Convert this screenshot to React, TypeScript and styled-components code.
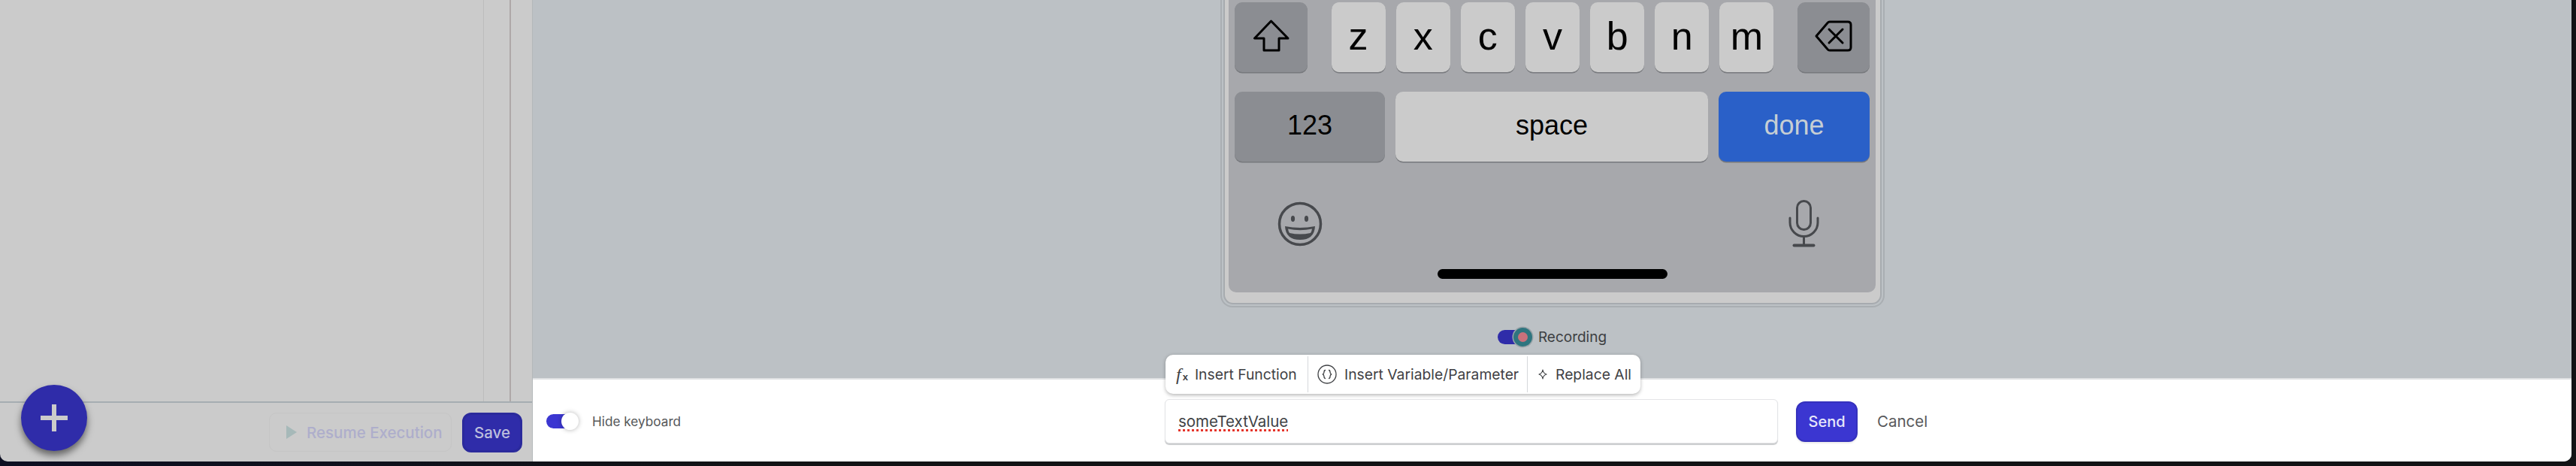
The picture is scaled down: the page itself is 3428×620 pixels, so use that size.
import React from "react";
import styled, { createGlobalStyle } from "styled-components";

const Global = createGlobalStyle`
  html, body { margin: 0; padding: 0; background: #121315; overflow: hidden; }
  * { box-sizing: border-box; }
  #root { width: 3428px; height: 620px; font-family: Inter, "Liberation Sans", sans-serif; }
`;

const Page = styled.div`
  width: 3428px;
  height: 620px;
  padding: 0 6px 6px 0;
  background: linear-gradient(90deg, #0d0f22 0%, #121315 30%);
`;
const Window = styled.div`
  display: flex;
  height: 614px;
  border-radius: 0 0 10px 10px;
  overflow: hidden;
`;

const LeftPanel = styled.aside`
  position: relative;
  display: flex;
  flex-direction: column;
  width: 709px;
  flex: none;
  background: #cbcbcb;
  border-right: 1px solid #b4b8ba;
`;
const LeftBody = styled.div`
  display: flex;
  flex: 1;
`;
const TreeArea = styled.div`
  flex: 1;
  border-right: 1px solid #bcbcbc;
`;
const Rail = styled.div`
  width: 36px;
  border-right: 2px solid #aea8a8;
`;
const RailGap = styled.div`
  width: 28px;
`;
const LeftFooter = styled.div`
  display: flex;
  justify-content: flex-end;
  align-items: center;
  gap: 14px;
  height: 80px;
  padding-right: 13px;
  border-top: 2px solid #a6adb2;
`;
const ResumeButton = styled.div`
  display: flex;
  align-items: center;
  gap: 12px;
  width: 243px;
  height: 52px;
  padding-left: 21px;
  border: 1px solid #c5c5c5;
  border-radius: 10px;
  color: #aeaecb;
  font-size: 20.5px;
  font-weight: 500;
  white-space: nowrap;
`;
const Save = styled.div`
  display: flex;
  align-items: center;
  justify-content: center;
  width: 80px;
  height: 53px;
  border: 3px solid #2b2a9c;
  border-radius: 12px;
  background: #2f2ca9;
  color: #bcbedd;
  font-size: 20.5px;
  font-weight: 500;
`;
const Fab = styled.div`
  position: absolute;
  left: 28px;
  bottom: 14px;
  display: flex;
  align-items: center;
  justify-content: center;
  width: 88px;
  height: 88px;
  border-radius: 50%;
  background: #2f2ca9;
  box-shadow: 0 6px 10px rgba(0, 0, 0, 0.5);
`;

const Main = styled.main`
  display: flex;
  flex-direction: column;
  flex: 1;
  min-width: 0;
  background: #bcc1c5;
`;
const Stage = styled.div`
  display: flex;
  flex-direction: column;
  align-items: center;
  flex: 1;
`;
const PhoneOuter = styled.div`
  width: 884px;
  padding: 0 2px 2px;
  border: solid #a9aeb2;
  border-width: 0 2px 2px;
  border-radius: 0 0 16px 16px;
`;
const PhoneInner = styled.div`
  padding: 0 5.5px 14px;
  background: #cbcbcb;
  border: solid #a7abaf;
  border-width: 0 2px 2px;
  border-radius: 0 0 13px 13px;
`;
const Keyboard = styled.div`
  width: 861px;
  height: 389px;
  padding: 3px 8px 0;
  background: #a7a8ac;
  border-radius: 0 0 10px 10px;
`;
const KeyRow = styled.div`
  display: flex;
  justify-content: space-between;
  height: 93px;
  margin-bottom: 26px;
`;
const Letters = styled.div`
  display: flex;
  gap: 14px;
`;
const Key = styled.div<{ $w: number; $kind?: "light" | "dark" | "blue"; $size?: number }>`
  display: flex;
  align-items: center;
  justify-content: center;
  width: ${(p) => p.$w}px;
  height: 93px;
  padding-bottom: 4px;
  border-radius: 10px;
  font-family: "Liberation Sans", Arial, sans-serif;
  font-size: ${(p) => p.$size ?? 36}px;
  background: ${(p) => (p.$kind === "dark" ? "#8b8d92" : p.$kind === "blue" ? "#2a60c8" : "#cbcbcb")};
  color: ${(p) => (p.$kind === "blue" ? "#c6ced4" : "#000")};
  box-shadow: 0 1.5px 0 #77797d;
`;
const KeyboardTools = styled.div`
  display: flex;
  justify-content: space-between;
  align-items: center;
  height: 63px;
  margin-top: 51px;
  padding: 0 67px 0 57px;
`;
const HomeBar = styled.div`
  width: 306px;
  height: 13px;
  margin: 29px auto 0;
  border-radius: 7px;
  background: #000;
`;
const RecordingRow = styled.div`
  display: flex;
  align-items: center;
  margin-top: 28px;
  font-size: 19px;
  color: #3d3f42;
`;
const RecordingTrack = styled.div`
  position: relative;
  width: 34px;
  height: 19px;
  margin-right: 20px;
  border-radius: 10px;
  background: #2f2ca9;
`;
const RecordingKnob = styled.div`
  position: absolute;
  left: 21px;
  top: -3px;
  width: 25px;
  height: 25px;
  border-radius: 50%;
  border: 6px solid #2f757f;
  background: #c9717b;
  box-shadow: 0 0 0 1.5px #9aa3a8;
`;

const Bar = styled.div`
  display: flex;
  align-items: center;
  height: 111px;
  padding-top: 2px;
  background: #fff;
  border-top: 2px solid #dfe1e3;
`;
const HideGroup = styled.div`
  display: flex;
  align-items: center;
  width: 841px;
  padding-left: 18px;
  font-size: 17.2px;
  color: #555759;
`;
const HideTrack = styled.div`
  position: relative;
  width: 40px;
  height: 19px;
  margin-right: 21px;
  border-radius: 10px;
  background: #3b36d1;
`;
const HideKnob = styled.div`
  position: absolute;
  right: -3px;
  top: -2.5px;
  width: 23px;
  height: 23px;
  border-radius: 50%;
  background: #fff;
  box-shadow: 0 0 6px rgba(0, 0, 0, 0.3);
`;
const InputWrap = styled.div`
  position: relative;
  width: 816px;
  height: 59px;
  margin-right: 24px;
`;
const Input = styled.div`
  display: flex;
  align-items: center;
  height: 100%;
  padding: 0 17px;
  border: 1px solid #e4e5e7;
  border-radius: 6px;
  background: #fff;
  box-shadow: 0 1.5px 1px #c8cacc;
  font-size: 20.5px;
  color: #404245;
`;
const Misspelled = styled.span`
  text-decoration: underline dotted #e5342a;
  text-decoration-thickness: 3px;
  text-underline-offset: 3px;
`;
const Toolbar = styled.div`
  position: absolute;
  left: 1px;
  bottom: calc(100% + 7px);
  display: flex;
  height: 52px;
  padding: 2px 0;
  background: #fff;
  border-radius: 10px;
  box-shadow: 0 1.5px 5px rgba(0, 0, 0, 0.28);
  font-size: 19.3px;
  color: #3f4144;
  white-space: nowrap;
`;
const ToolItem = styled.div<{ $w: number; $pad: number; $gap: number; $last?: boolean }>`
  display: flex;
  align-items: center;
  gap: ${(p) => p.$gap}px;
  width: ${(p) => p.$w}px;
  padding-left: ${(p) => p.$pad}px;
  border-right: ${(p) => (p.$last ? "none" : "1px solid #d5d8db")};
`;
const FxMark = styled.span`
  font-family: "Liberation Serif", "DejaVu Serif", serif;
  font-style: italic;
  font-size: 24px;
  line-height: 1;
  color: #3f4144;
  b {
    font-style: normal;
    font-family: "Liberation Sans", sans-serif;
    font-size: 13px;
    margin-left: 2px;
  }
`;
const Send = styled.div`
  display: flex;
  align-items: center;
  justify-content: center;
  width: 82px;
  height: 54px;
  margin-right: 26px;
  border: 2px solid #3531bd;
  border-radius: 12px;
  background: #3b36d1;
  box-shadow: 0 1.5px 2px rgba(0, 0, 0, 0.08);
  color: #e6e7fa;
  font-size: 20px;
  font-weight: 500;
`;
const Cancel = styled.div`
  font-size: 20.5px;
  color: #58595b;
`;

const Plus = () => (
  <svg width="36" height="36" viewBox="0 0 36 36" fill="#cbcbcb" aria-hidden>
    <rect x="15" y="0" width="6" height="36" />
    <rect x="0" y="15" width="36" height="6" />
  </svg>
);
const Play = () => (
  <svg width="16" height="20" viewBox="0 0 16 20" fill="#a6b9b9" aria-hidden>
    <path d="M1 1l14 9-14 9z" />
  </svg>
);
const ShiftIcon = () => (
  <svg width="49" height="43" viewBox="0 0 49 43" fill="none" stroke="#000" strokeWidth="3" strokeLinejoin="round" aria-hidden>
    <path d="M24.5 2L2.5 25H15V41H35V25H47z" />
  </svg>
);
const DeleteIcon = () => (
  <svg width="50" height="42" viewBox="0 0 50 42" fill="none" stroke="#000" strokeWidth="3" strokeLinejoin="round" strokeLinecap="round" aria-hidden>
    <path d="M2 21L17 3.5Q18 2 20 2H44Q48 2 48 6V36Q48 40 44 40H20Q18 40 17 38.5z" />
    <path d="M19 12L37 30M37 12L19 30" />
  </svg>
);
const EmojiIcon = () => (
  <svg width="60" height="60" viewBox="0 0 60 60" fill="none" aria-hidden>
    <circle cx="30" cy="30" r="27.5" stroke="#47494d" strokeWidth="3.5" />
    <ellipse cx="20.5" cy="23" rx="2.6" ry="4" fill="#47494d" />
    <ellipse cx="38.5" cy="23" rx="2.6" ry="4" fill="#47494d" />
    <path d="M10 33Q30 37 50 33Q49 51 30 51Q11 51 10 33z" fill="#47494d" />
    <path d="M14 36.5Q30 40 46 36.5Q45.5 40 44 42Q30 45 16 42Q14.5 40 14 36.5z" fill="#a7a8ac" />
  </svg>
);
const MicIcon = () => (
  <svg width="41" height="63" viewBox="0 0 41 63" fill="none" stroke="#47494d" strokeWidth="3" aria-hidden>
    <rect x="11.5" y="1.5" width="18" height="38" rx="9" />
    <path d="M2 24v6a18.500 18.500 0 0 0 37 0v-6" strokeLinecap="round" />
    <path d="M20.500 48v12" />
    <path d="M7.500 60.500h26" strokeWidth="4" strokeLinecap="round" />
  </svg>
);
const VariableIcon = () => (
  <svg width="26" height="26" viewBox="0 0 26 26" fill="none" stroke="#3f4144" strokeWidth="1.3" aria-hidden>
    <circle cx="13" cy="13" r="12" />
    <path d="M11 7.500c-2 0-2 1-2 2.500s0 2.500-2 3c2 .5 2 1.500 2 3s0 2.500 2 2.500" />
    <path d="M15 7.500c2 0 2 1 2 2.500s0 2.500 2 3c-2 .5-2 1.500-2 3s0 2.500-2 2.500" />
  </svg>
);
const SparkIcon = () => (
  <svg width="12" height="14" viewBox="0 0 12 14" fill="none" stroke="#3f4144" strokeWidth="1.2" strokeLinejoin="round" aria-hidden>
    <path d="M6 1Q6.500 5.500 11 7Q6.500 8.500 6 13Q5.500 8.500 1 7Q5.500 5.500 6 1z" />
  </svg>
);

const letters = ["z", "x", "c", "v", "b", "n", "m"];

export default function App() {
  return (
    <Page>
      <Global />
      <Window>
        <LeftPanel>
          <LeftBody>
            <TreeArea />
            <Rail />
            <RailGap />
          </LeftBody>
          <LeftFooter>
            <ResumeButton>
              <Play />
              Resume Execution
            </ResumeButton>
            <Save>Save</Save>
          </LeftFooter>
          <Fab>
            <Plus />
          </Fab>
        </LeftPanel>
        <Main>
          <Stage>
            <PhoneOuter>
              <PhoneInner>
                <Keyboard>
                  <KeyRow>
                    <Key $w={97} $kind="dark">
                      <ShiftIcon />
                    </Key>
                    <Letters>
                      {letters.map((l) => (
                        <Key key={l} $w={72.15} $size={52}>
                          {l}
                        </Key>
                      ))}
                    </Letters>
                    <Key $w={96} $kind="dark">
                      <DeleteIcon />
                    </Key>
                  </KeyRow>
                  <KeyRow>
                    <Key $w={200} $kind="dark">123</Key>
                    <Key $w={416}>space</Key>
                    <Key $w={201} $kind="blue">done</Key>
                  </KeyRow>
                  <KeyboardTools>
                    <EmojiIcon />
                    <MicIcon />
                  </KeyboardTools>
                  <HomeBar />
                </Keyboard>
              </PhoneInner>
            </PhoneOuter>
            <RecordingRow>
              <RecordingTrack>
                <RecordingKnob />
              </RecordingTrack>
              Recording
            </RecordingRow>
          </Stage>
          <Bar>
            <HideGroup>
              <HideTrack>
                <HideKnob />
              </HideTrack>
              Hide keyboard
            </HideGroup>
            <InputWrap>
              <Toolbar>
                <ToolItem $w={190} $pad={14} $gap={9}>
                  <FxMark>f<b>x</b></FxMark>
                  Insert Function
                </ToolItem>
                <ToolItem $w={292} $pad={12} $gap={10}>
                  <VariableIcon />
                  Insert Variable/Parameter
                </ToolItem>
                <ToolItem $w={150} $pad={14} $gap={11} $last>
                  <SparkIcon />
                  Replace All
                </ToolItem>
              </Toolbar>
              <Input>
                <Misspelled>someTextValue</Misspelled>
              </Input>
            </InputWrap>
            <Send>Send</Send>
            <Cancel>Cancel</Cancel>
          </Bar>
        </Main>
      </Window>
    </Page>
  );
}
